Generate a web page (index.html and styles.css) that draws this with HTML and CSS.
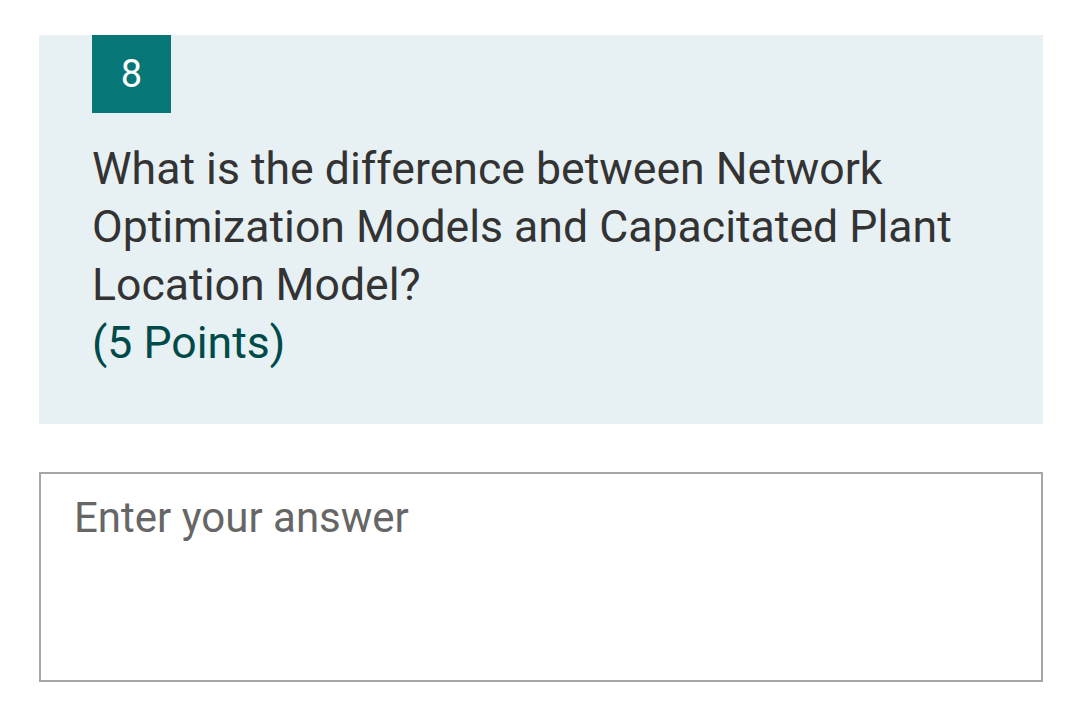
FILE: index.html
```html
<!DOCTYPE html>
<html>
<head>
<meta charset="utf-8">
<link rel="stylesheet" href="styles.css">
</head>
<body>
<div class="page">
  <section class="question">
    <div class="badge">8</div>
    <p class="title">What is the difference between Network Optimization Models and Capacitated Plant Location Model?<br><span class="points">(5 Points)</span></p>
  </section>
  <div class="answer"><span class="placeholder">Enter your answer</span></div>
</div>
</body>
</html>
```
FILE: styles.css
```css
html, body {
  margin: 0;
  padding: 0;
  background: #ffffff;
}
.page {
  padding: 35px 37px 0 39px;
  width: 1004px;
  font-family: Roboto, "Liberation Sans", sans-serif;
}
.question {
  background: #e7f0f3;
  padding: 0 40px 52px 53px;
}
.badge {
  width: 79px;
  height: 78px;
  background: #077677;
  color: #ffffff;
  font-size: 38px;
  display: flex;
  align-items: center;
  justify-content: center;
}
.title {
  margin: 27px 0 0 0;
  font-size: 44.6px;
  line-height: 58px;
  color: #333333;
}
.points {
  color: #004a4a;
}
.answer {
  margin-top: 48px;
  border: 2px solid #a6a6a6;
  padding: 22px 0 0 33px;
  height: 184px;
}
.placeholder {
  font-size: 42px;
  line-height: 44px;
  color: #666666;
}
```
